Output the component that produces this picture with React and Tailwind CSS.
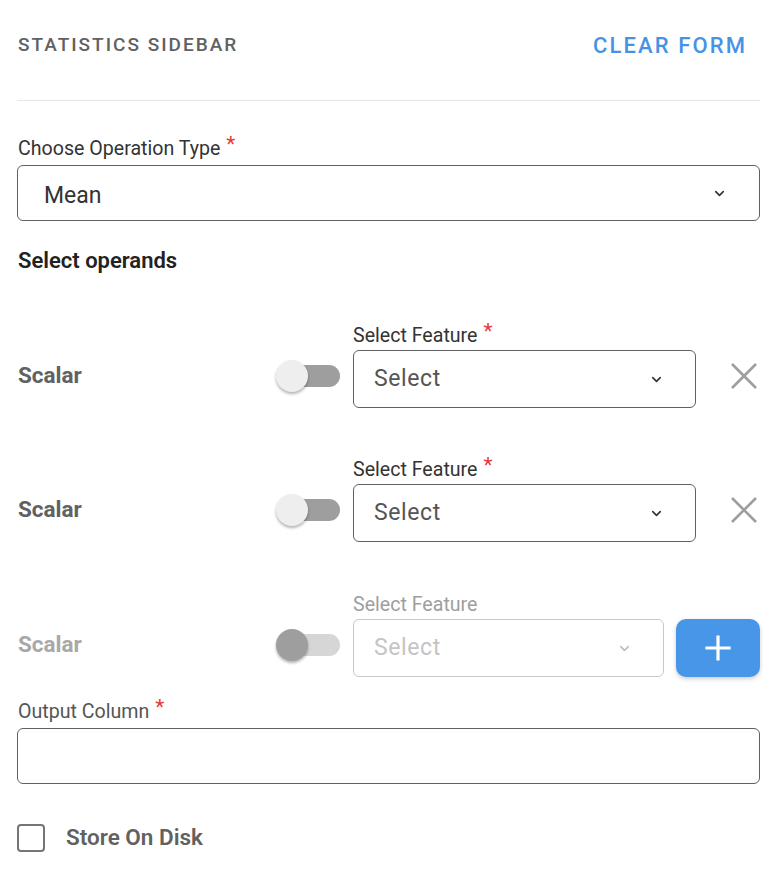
import React from "react";

const Chevron = ({ className = "" }) => (
  <svg width="15" height="15" viewBox="0 0 24 24" className={className} fill="none" stroke="currentColor" strokeWidth="2.6" strokeLinecap="round" strokeLinejoin="round">
    <path d="M6 9l6 6 6-6" />
  </svg>
);

const Star = () => <span className="text-[21px] text-[#e53935] leading-none relative top-[-5px] ml-[6px]">*</span>;

function Toggle({ disabled }) {
  return (
    <div className="relative w-[64px] h-[32px] shrink-0">
      <div className={`absolute right-0 top-[5px] w-[56px] h-[22px] rounded-full ${disabled ? "bg-[#d6d6d6]" : "bg-[#9e9e9e]"}`} />
      <div className={`absolute left-0 top-0 w-[32px] h-[32px] rounded-full shadow-[0_2px_3px_rgba(0,0,0,0.3)] ${disabled ? "bg-[#9e9e9e]" : "bg-[#eeeeee]"}`} />
    </div>
  );
}

function OperandRow({ disabled, last }) {
  return (
    <div className="flex items-end">
      <div className={`flex-1 h-[58px] flex items-center pb-[6px] text-[22.5px] font-bold ${disabled ? "text-[#a8a8a8]" : "text-[#616161]"}`}>Scalar</div>
      <div className="h-[58px] flex items-center pb-[7px] mr-[13px]">
        <Toggle disabled={disabled} />
      </div>
      <div className={`${last ? "w-[311px]" : "w-[343px]"} flex flex-col`}>
        <div className={`h-[24px] flex items-center pt-[4px] text-[19.6px] ${disabled ? "text-[#9e9e9e]" : "text-[#333333]"}`}>
          Select Feature{!disabled && <Star />}
        </div>
        <div className={`mt-[4px] h-[58px] rounded-[6px] border flex items-center pl-[20px] pr-[31px] ${disabled ? "border-[#c8c8c8]" : "border-[#616161]"}`}>
          <span className={`flex-1 text-[23px] tracking-[0.6px] ${disabled ? "text-[#c4c4c4]" : "text-[#555555]"}`}>Select</span>
          <Chevron className={disabled ? "text-[#bdbdbd]" : "text-[#333333]"} />
        </div>
      </div>
      {last ? (
        <button className="ml-[12px] w-[84px] h-[58px] rounded-[10px] bg-[#4896e8] flex items-center justify-center shadow-[0_2px_4px_rgba(0,0,0,0.2)]">
          <svg width="28" height="28" viewBox="0 0 28 28" stroke="white" strokeWidth="3.2" strokeLinecap="square">
            <path d="M14 3v22M3 14h22" />
          </svg>
        </button>
      ) : (
        <div className="w-[64px] h-[58px] flex items-center justify-end pr-[2px] pb-[6px]">
          <svg width="28" height="28" viewBox="0 0 28 28" stroke="#9e9e9e" strokeWidth="2.6">
            <path d="M2 2l24 24M26 2L2 26" />
          </svg>
        </div>
      )}
    </div>
  );
}

export default function App() {
  return (
    <div className="w-[782px] h-[878px] bg-white pl-[17px] pr-[22px]" style={{ fontFamily: "Roboto, 'Liberation Sans', sans-serif" }}>
      <div className="h-[101px] border-b border-[#e6e6e9] flex items-start pt-[33px] pl-[1px]">
        <div className="flex-1 flex items-center justify-between h-[24px]">
          <span className="text-[19px] font-medium tracking-[2px] text-[#616161]">STATISTICS SIDEBAR</span>
          <span className="text-[22px] font-medium tracking-[2.1px] text-[#4693e6] mr-[13px]">CLEAR FORM</span>
        </div>
      </div>

      <div className="mt-[35px] h-[24px] flex items-center pt-[2px] text-[19.6px] text-[#333333] pl-[1px]">
        Choose Operation Type<Star />
      </div>
      <div className="mt-[5px] h-[56px] rounded-[6px] border border-[#616161] flex items-center pl-[26px] pr-[32px]">
        <span className="flex-1 text-[23px] text-[#333333] pt-[6px]">Mean</span>
        <Chevron className="text-[#333333]" />
      </div>

      <div className="mt-[25px] h-[28px] flex items-center text-[22px] font-semibold text-[#222222] pl-[1px]">Select operands</div>

      <div className="mt-[48px] pl-[1px]">
        <OperandRow />
      </div>
      <div className="mt-[48px] pl-[1px]">
        <OperandRow />
      </div>
      <div className="mt-[49px] pl-[1px]">
        <OperandRow disabled last />
      </div>

      <div className="mt-[22px] h-[24px] flex items-center pt-[2px] text-[19.6px] text-[#555555] pl-[1px]">
        Output Column<Star />
      </div>
      <div className="mt-[5px] h-[56px] rounded-[6px] border border-[#616161]" />

      <div className="mt-[40px] flex items-center h-[28px]">
        <div className="w-[28px] h-[28px] rounded-[4px] border-[2.5px] border-[#757575]" />
        <span className="ml-[21px] text-[22.5px] font-semibold text-[#616161]">Store On Disk</span>
      </div>
    </div>
  );
}
